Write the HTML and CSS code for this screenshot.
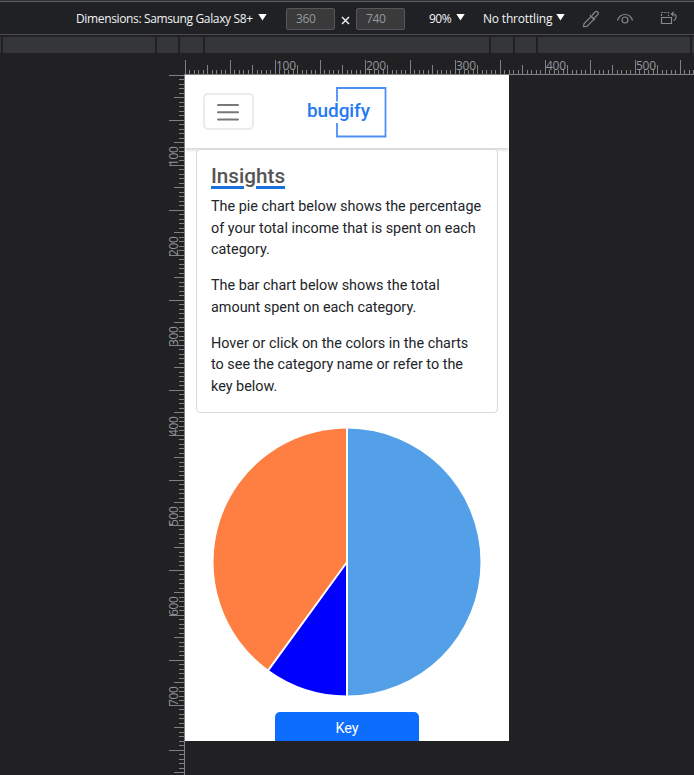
FILE: index.html
```html
<!DOCTYPE html>
<html lang="en">
<head>
<meta charset="utf-8">
<title>Budgify</title>
<link rel="stylesheet" href="styles.css">
</head>
<body>
<header class="toolbar">
  <span class="device">Dimensions: Samsung Galaxy S8+</span>
  <i class="caret"></i>
  <span class="size width">360</span>
  <svg class="times" width="9" height="9" viewBox="0 0 9 9"><path d="M1 1l7 7M8 1L1 8"/></svg>
  <span class="size height">740</span>
  <span class="zoom">90%</span>
  <i class="caret"></i>
  <span class="throttle">No throttling</span>
  <i class="caret"></i>
  <svg class="icon dropper" width="18" height="18" viewBox="0 0 18 18"><path d="M1.500 16.500l.6-3 7-7 2.800 2.800-7 7zM8 5l5 5M10 5.500l3-3.500q1.500-1.300 2.700 0 1.300 1.200 0 2.700L12.300 8"/></svg>
  <svg class="icon eye" width="18" height="18" viewBox="0 0 18 18"><path d="M1.500 10.500C4 2.500 14 2.500 16.500 10.500"/><circle cx="9" cy="10" r="3"/></svg>
  <svg class="icon rotate" width="18" height="18" viewBox="0 0 18 18"><path d="M1.500 7.500h10v6h-10z"/><path stroke-dasharray="2 1.200" d="M1.500 6V2.500H8.500V6"/><path d="M11.500 4h2q3 .5 2.500 3.500-.3 2.500-2.500 3M13.500 1.800L11.500 4l2 2.200"/></svg>
</header>
<div class="media-bar"><i></i><i></i><i></i><i></i><i></i><i></i><i></i><i></i><i></i></div>
<svg class="ruler-x" id="ruler-x" width="510" height="22"></svg>
<main class="workspace">
  <svg class="ruler-y" id="ruler-y" width="185" height="701"></svg>
  <div class="screen">
    <nav class="navbar">
      <div class="menu"><svg width="22" height="18" viewBox="0 0 22 18"><path d="M1 2h20M1 9.200h20M1 16.500h20"/></svg></div>
      <svg class="logo" width="84" height="54" viewBox="0 0 84 54"><path d="M32 16.500V3H80.500V51.500H32V38"/><text x="2" y="32" textLength="63">budgify</text></svg>
    </nav>
    <section class="card">
      <h1>Insights</h1>
      <p>The pie chart below shows the percentage<br>of your total income that is spent on each<br>category.</p>
      <p>The bar chart below shows the total<br>amount spent on each category.</p>
      <p>Hover or click on the colors in the charts<br>to see the category name or refer to the<br>key below.</p>
    </section>
    <svg class="pie" width="270" height="270" viewBox="0 0 270 270">
      <path fill="#54a0e8" d="M135 135V1.500A133.500 133.500 0 0 1 135 268.500z"/>
      <path fill="#0000ff" d="M135 135V268.500A133.500 133.500 0 0 1 56.530 243z"/>
      <path fill="#ff7f42" d="M135 135L56.530 243A133.500 133.500 0 0 1 135 1.500z"/>
      <path class="split" d="M135 0V270M135 135L55.600 244.200"/>
    </svg>
    <div class="key">Key</div>
  </div>
</main>
<script src="rulers.js"></script>
</body>
</html>
```
FILE: styles.css
```css
* { box-sizing: border-box; }
body { margin: 0; width: 694px; height: 775px; overflow: hidden; background: #212123; font-family: Roboto, sans-serif; }
.toolbar { height: 35px; display: flex; align-items: center; padding: 3px 0 0 76px; border-top: 1px solid #303134; border-bottom: 1px solid #4a4b4f; background: #202124; box-shadow: inset 0 1px #5c5d60; color: #f1f3f4; font: 12px/16px "Open Sans", sans-serif; white-space: nowrap; }
.device { width: 178px; letter-spacing: -.36px; }
.caret { width: 9px; height: 7px; margin: -4px 0 0 4px; background: #fff; clip-path: polygon(0 0, 100% 0, 50% 100%); }
.size { width: 49px; height: 22px; border: 1px solid #56575a; border-radius: 2px; background: #3a3a3a; color: #96999d; padding: 2px 0 0 9px; letter-spacing: -.3px; }
.width { margin-left: 19px; }
.times { margin: 3px 6px 0; fill: none; stroke: #e8eaed; stroke-width: 1.5; }
.height { margin-left: 0; }
.zoom { width: 23px; margin-left: 24px; letter-spacing: -.5px; }
.throttle { width: 69px; margin-left: 18px; letter-spacing: -.18px; }
.icon { fill: none; stroke: #85888c; stroke-width: 1.2; }
.dropper { margin-left: 17px; }
.eye { margin-left: 16px; }
.rotate { margin-left: 26px; }
.media-bar { height: 16px; margin-top: 2px; display: grid; grid-template-columns: 1px 152px 21px 23px 284px 22px 21px 152px 2px; column-gap: 2px; }
.media-bar i { background: #35363a; }
.ruler-x { display: block; height: 22px; margin-left: 184px; }
.ruler-x path, .ruler-y path { fill: none; stroke: #7f8184; shape-rendering: crispEdges; }
.ruler-x text, .ruler-y text { font: 12px "Open Sans", sans-serif; fill: #92979d; }
.workspace { display: flex; align-items: flex-start; }
.screen { width: 324px; height: 666px; overflow: hidden; background: #fff; display: flex; flex-direction: column; align-items: center; }
.navbar { width: 100%; height: 73px; flex: none; display: flex; align-items: flex-start; box-shadow: 0 2px 3px rgba(0,0,0,.17); }
.menu { width: 51px; height: 37px; margin: 18px 0 0 18px; border: 2px solid #ebebeb; border-radius: 5px; display: grid; place-items: center; }
.menu svg { margin-left: -1px; }
.menu path { fill: none; stroke: #77787a; stroke-width: 2; stroke-linecap: round; }
.logo { margin: 10px 0 0 51px; }
.logo path { fill: none; stroke: #4d90f4; stroke-width: 1.8; }
.logo text { font: 500 19px Roboto, sans-serif; fill: #267af1; }
.card { width: 302px; height: 264px; flex: none; margin-top: 1px; padding: 14px 14px 0; border: 1px solid #d8d8d8; border-radius: 4px; background: #fff; position: relative; }
h1 { display: table; margin: 0 0 7px; color: #555; font: 500 20.700px/25px Roboto, sans-serif; text-decoration: underline #1971df 2.700px; text-underline-offset: 3px; text-decoration-skip-ink: auto; }
.card p { margin: 0 0 14.400px; color: #212529; font-size: 14.400px; line-height: 21.600px; letter-spacing: 0; white-space: nowrap; }
.pie { flex: none; margin-top: 14px; }
.split { fill: none; stroke: #fff; stroke-width: 2; }
.key { width: 144px; height: 34px; flex: none; margin-top: 15px; border-radius: 5px; background: #0d6efd; color: #fff; font-size: 14.400px; line-height: 33px; text-align: center; }
```
FILE: rulers.js
```js
const SCALE = 0.9;
const length = k => (k % 10 === 0 ? 15 : k % 5 === 0 ? 10 : 5);

function label(svg, value, attrs) {
  const text = document.createElementNS('http://www.w3.org/2000/svg', 'text');
  for (const name in attrs) text.setAttribute(name, attrs[name]);
  text.textContent = value;
  svg.append(text);
}

function ruler(id, vertical, extent) {
  const svg = document.getElementById(id);
  let d = vertical ? `M184.500 0V${extent}` : `M0 21.500H${extent}`;
  for (let k = 0; k * 5 * SCALE < extent; k++) {
    const at = Math.floor(k * 5 * SCALE);
    d += vertical ? `M${184 - length(k)} ${at + 0.5}H184` : `M${at + 1.5} ${22 - length(k)}V22`;
    if (k && k % 20 === 0) {
      label(svg, k * 5, vertical
        ? { transform: `translate(178 ${at + 1}) rotate(-90)`, textLength: 20 }
        : { x: at + 2, y: 17, textLength: 20 });
    }
  }
  const path = document.createElementNS('http://www.w3.org/2000/svg', 'path');
  path.setAttribute('d', d);
  svg.prepend(path);
}

ruler('ruler-x', false, 510);
ruler('ruler-y', true, 701);
```
